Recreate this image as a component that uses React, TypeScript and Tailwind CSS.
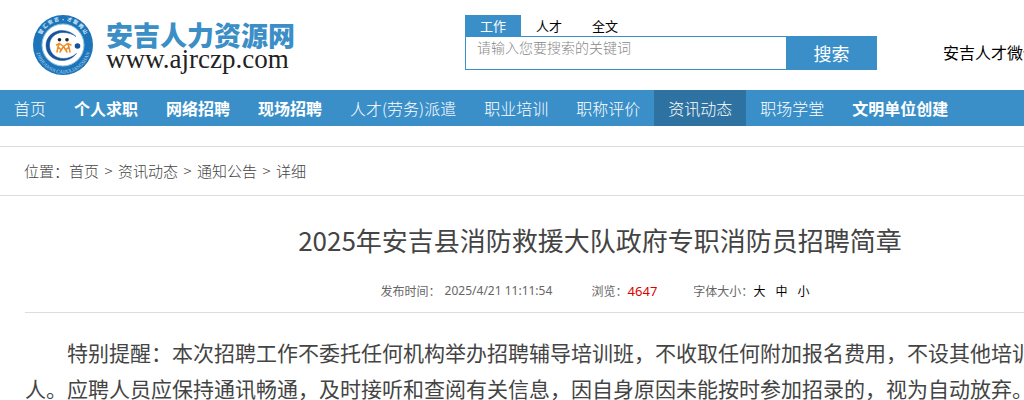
import React, { useState } from 'react';

const searchTypes = ['工作', '人才', '全文'];

const navItems = [
    { name: '首页', bold: false },
    { name: '个人求职', bold: true },
    { name: '网络招聘', bold: true },
    { name: '现场招聘', bold: true },
    { name: '人才(劳务)派遣', bold: false },
    { name: '职业培训', bold: false },
    { name: '职称评价', bold: false },
    { name: '资讯动态', bold: false },
    { name: '职场学堂', bold: false },
    { name: '文明单位创建', bold: true },
];

const crumbs = ['首页', '资讯动态', '通知公告', '详细'];

const fontSizes = ['大', '中', '小'];

const LogoMark: React.FC = () => (
    <svg viewBox="0 0 60 60" className="size-[60px] shrink-0" aria-hidden="true">
        <defs>
            <path id="ringTop" d="M7 34A23.500 23.500 0 1 1 53 34" />
            <path id="ringBottom" d="M2.500 31A27.500 27.500 0 0 0 57.500 31" />
        </defs>
        <circle cx="30" cy="30" r="30" fill="#1d74b8" />
        <circle cx="30" cy="30" r="21" fill="#fff" stroke="#8fc3e6" strokeWidth="1" />
        <text fontSize="5" fontWeight="700" fill="#d8ecf9" fontFamily="Noto Sans CJK SC, sans-serif" textAnchor="middle">
            <textPath href="#ringTop" startOffset="50%">智  汇  安  吉  ·  才  聚  两  山</textPath>
        </text>
        <text fontSize="5" fill="#b5d9f0" fontFamily="Liberation Serif, serif" textAnchor="middle">
            <textPath href="#ringBottom" startOffset="50%">ZHIHUIANJI CAIJULIANGSHAN</textPath>
        </text>
        <path d="M43 21.500C39 17.500 34 15.500 29 15.500C20 15.500 13 22 13 30.500C13 39 20 45.500 29 45.500C35 45.500 40 43 43.500 38.500C39.500 42 35 43.500 30.500 43.500C22 43.500 16.500 37.500 16.500 30.500C16.500 23 22 17.500 30 17.500C35 17.500 39.500 19 43 21.500Z" fill="#17529b" stroke="#17529b" strokeWidth="0.500" />
        <circle cx="44.500" cy="31" r="2.800" fill="#17529b" />
        <circle cx="26.500" cy="24.800" r="1.800" fill="#222" />
        <circle cx="34" cy="24.800" r="1.800" fill="#222" />
        <path d="M23.500 30L26.500 28.500L30.500 31.500L34.500 28.500L38 30M26.500 28.500L25 32L24 37M30.500 31.500L27 37M25 32L28.500 35M30.500 31.500L34 37M34.500 28.500L36 32L37 37M36 32L32.500 35" fill="none" stroke="#ee8a22" strokeWidth="1.500" strokeLinecap="round" strokeLinejoin="round" />
    </svg>
);

const App: React.FC = () => {
    const [searchType, setSearchType] = useState('工作');
    const [keyword, setKeyword] = useState('');
    const [activeNav, setActiveNav] = useState('资讯动态');

    return (
        <div className="overflow-hidden bg-white font-['Noto_Sans_CJK_SC',sans-serif] text-[#444]">
            <div className="min-w-[1200px]">
                {/* 顶部 */}
                <header className="flex h-[90px] items-start">
                    <a href="#" className="mt-[15px] ml-[33px] flex w-[432px] gap-[13px]">
                        <LogoMark />
                        <span className="flex flex-col pt-2">
                            <span className="text-[27px] leading-6 font-black text-[#3b8fc6]">安吉人力资源网</span>
                            <span className="font-['Liberation_Serif',serif] text-[27px] leading-6 text-[#222]">www.ajrczp.com</span>
                        </span>
                    </a>

                    <form className="mt-[15px] w-[412px]" onSubmit={e => e.preventDefault()}>
                        <div className="flex">
                            {searchTypes.map(type => (
                                <button
                                    key={type}
                                    type="button"
                                    onClick={() => setSearchType(type)}
                                    className={`h-[21px] px-[15px] text-[13px] leading-5 ${searchType === type ? 'bg-[#3a8fc9] text-white' : 'text-black'}`}
                                >
                                    {type}
                                </button>
                            ))}
                        </div>
                        <div className="flex h-[34px]">
                            <input
                                type="text"
                                aria-label="关键词"
                                placeholder="请输入您要搜索的关键词"
                                value={keyword}
                                onChange={e => setKeyword(e.target.value)}
                                className="min-w-0 flex-1 border border-r-0 border-[#3a8fc9] px-[11px] pb-3 text-sm leading-5 font-light outline-none placeholder:text-[#888]"
                            />
                            <button type="submit" className="w-[91px] bg-[#3a8fc9] text-lg leading-8 text-white">搜索</button>
                        </div>
                    </form>

                    <span className="mt-10 ml-[66px] text-base whitespace-nowrap text-black">安吉人才微信</span>
                </header>

                {/* 导航 */}
                <nav className="flex h-9 bg-[#3a8fc9]">
                    {navItems.map(item => (
                        <a
                            key={item.name}
                            href="#"
                            onClick={() => setActiveNav(item.name)}
                            className={`px-[14px] text-base leading-9 whitespace-nowrap text-white ${item.bold ? 'font-bold' : 'font-light'} ${activeNav === item.name ? 'bg-[#2d72a1]' : ''}`}
                        >
                            {item.name}
                        </a>
                    ))}
                </nav>

                {/* 当前位置 */}
                <div className="mt-5 flex h-[50px] items-center border-y border-[#ddd] pl-6 text-[15px] font-light text-[#444]">
                    <span>位置：</span>
                    {crumbs.map((name, i) => (
                        <React.Fragment key={name}>
                            {i > 0 && <span className="w-[19px] text-center">&gt;</span>}
                            <a href="#">{name}</a>
                        </React.Fragment>
                    ))}
                </div>

                {/* 正文 */}
                <article className="mx-[25px]">
                    <h1 className="pt-6 text-center text-[26px] leading-10">2025年安吉县消防救援大队政府专职消防员招聘简章</h1>
                    <div className="flex h-[53px] items-center justify-center gap-9 border-b border-[#ddd] pt-[10px] pr-[10px] text-xs text-[#666]">
                        <span className="flex gap-1">
                            发布时间：
                            <time className="w-[111px] font-['Noto_Sans',sans-serif]">2025/4/21 11:11:54</time>
                        </span>
                        <span className="flex">
                            浏览：<span className="font-['Noto_Sans',sans-serif] text-[13px] leading-4 text-[#d00]">4647</span>
                        </span>
                        <span className="flex">
                            字体大小：
                            <span className="flex gap-[10px] text-black">
                                {fontSizes.map(size => (
                                    <button key={size} type="button">{size}</button>
                                ))}
                            </span>
                        </span>
                    </div>
                    <p className="mt-[21px] indent-[2em] text-[21px] leading-9 whitespace-nowrap">
                        特别提醒：本次招聘工作不委托任何机构举办招聘辅导培训班，不收取任何附加报名费用，不设其他培训
                        <br />
                        人。应聘人员应保持通讯畅通，及时接听和查阅有关信息，因自身原因未能按时参加招录的，视为自动放弃。
                    </p>
                </article>
            </div>
        </div>
    );
};

export default App;
